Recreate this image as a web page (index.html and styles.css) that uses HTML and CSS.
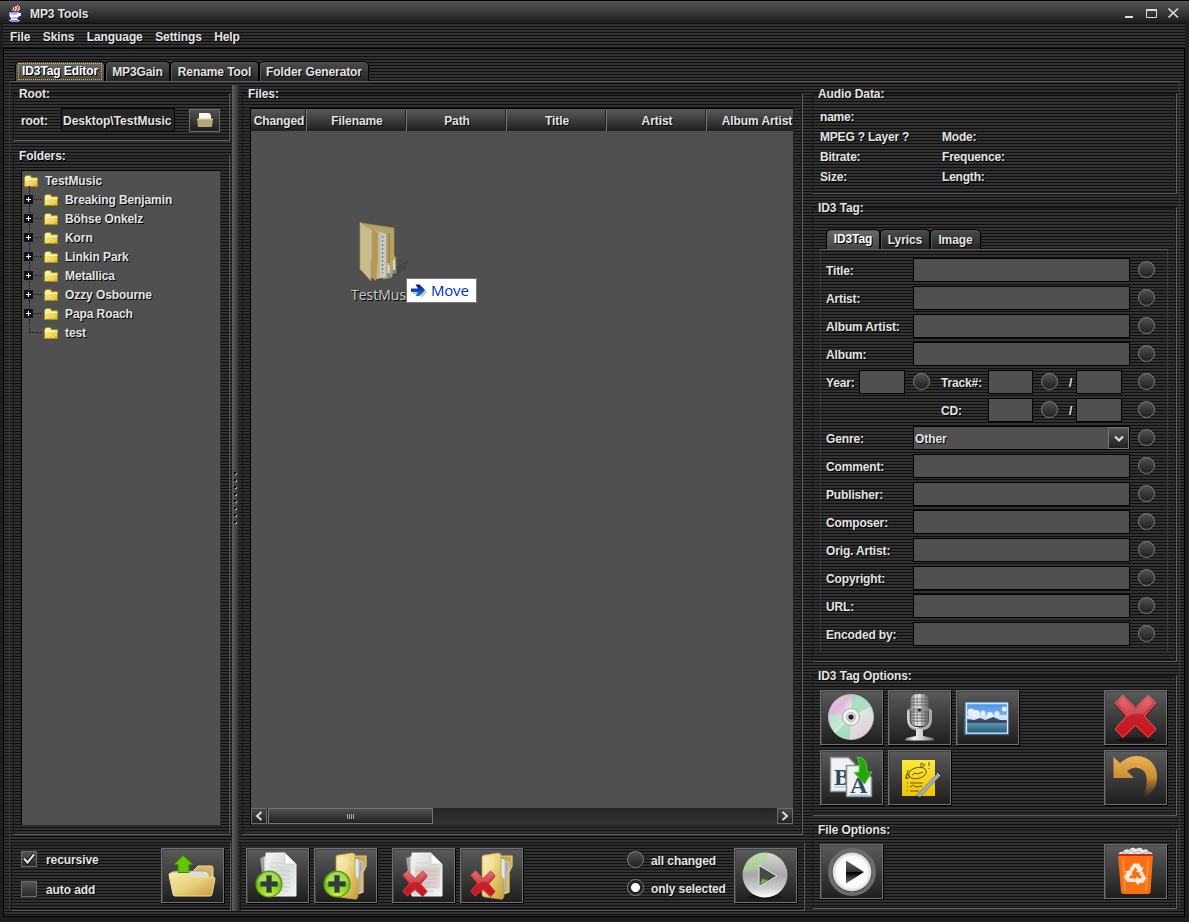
FILE: index.html
```html
<!DOCTYPE html>
<html lang="en">
<head>
<meta charset="utf-8">
<title>MP3 Tools</title>
<link rel="stylesheet" href="styles.css">
</head>
<body>
<svg class="defs" width="0" height="0">
  <defs>
    <linearGradient id="gold" x1="0" y1="0" x2="1" y2="1"><stop offset="0" stop-color="#f8ebb0"/><stop offset=".5" stop-color="#e8d07c"/><stop offset="1" stop-color="#c79a35"/></linearGradient>
    <linearGradient id="yel" x1="0" y1="0" x2="1" y2="1"><stop offset="0" stop-color="#fffbb0"/><stop offset="1" stop-color="#e3b020"/></linearGradient>
    <linearGradient id="red" x1="0" y1="0" x2="0" y2="1"><stop offset="0" stop-color="#e0565c"/><stop offset=".5" stop-color="#c4222b"/><stop offset="1" stop-color="#d0101b"/></linearGradient>
    <radialGradient id="green" cx=".5" cy=".9" r=".9"><stop offset="0" stop-color="#c4f04a"/><stop offset=".5" stop-color="#86cc1e"/><stop offset="1" stop-color="#569f10"/></radialGradient>
    <linearGradient id="paper" x1="0" y1="0" x2="1" y2="1"><stop offset="0" stop-color="#f4f6f5"/><stop offset=".5" stop-color="#d5dad7"/><stop offset="1" stop-color="#f0f8f2"/></linearGradient>
    <linearGradient id="disc" x1="0" y1="0" x2="1" y2="1"><stop offset="0" stop-color="#e8e8e6"/><stop offset=".25" stop-color="#dcb8d8"/><stop offset=".42" stop-color="#eee"/><stop offset=".6" stop-color="#dfe6e0"/><stop offset="1" stop-color="#e0bfdc"/></linearGradient>
    <linearGradient id="chrome" x1="0" y1="0" x2="1" y2="0"><stop offset="0" stop-color="#777"/><stop offset=".3" stop-color="#f4f4f4"/><stop offset=".6" stop-color="#ccc"/><stop offset="1" stop-color="#666"/></linearGradient>
    <linearGradient id="sky" x1="0" y1="0" x2="0" y2="1"><stop offset="0" stop-color="#4a94ea"/><stop offset="1" stop-color="#c5defa"/></linearGradient>
    <linearGradient id="sea" x1="0" y1="0" x2="0" y2="1"><stop offset="0" stop-color="#6393a8"/><stop offset="1" stop-color="#1e6480"/></linearGradient>
    <linearGradient id="undo" x1="0" y1="0" x2="0" y2="1"><stop offset="0" stop-color="#eeb258"/><stop offset=".5" stop-color="#cc8f30"/><stop offset=".95" stop-color="#b87a1e" stop-opacity="0"/></linearGradient>
    <linearGradient id="silver" x1="0" y1="0" x2="0" y2="1"><stop offset="0" stop-color="#d8dcd6"/><stop offset=".5" stop-color="#a8a6a8"/><stop offset=".8" stop-color="#cfcfcf"/><stop offset="1" stop-color="#fff"/></linearGradient>
    <linearGradient id="tri" x1="0" y1="0" x2="0" y2="1"><stop offset="0" stop-color="#666"/><stop offset=".48" stop-color="#333"/><stop offset=".52" stop-color="#000"/><stop offset="1" stop-color="#777"/></linearGradient>
    <linearGradient id="moveArrow" x1="0" y1="0" x2="0" y2="1"><stop offset="0" stop-color="#08107a"/><stop offset="1" stop-color="#0a86e8"/></linearGradient>
    <radialGradient id="white" cx=".5" cy=".5" r=".5"><stop offset="0" stop-color="#fff"/><stop offset=".8" stop-color="#fafafa"/><stop offset="1" stop-color="#d0d0d0"/></radialGradient>
    <linearGradient id="note" x1="0" y1="0" x2="0" y2="1"><stop offset="0" stop-color="#ffe93e"/><stop offset="1" stop-color="#edc208"/></linearGradient>
  </defs>
  <symbol id="folder" viewBox="0 0 14 12">
    <path d="M.5 11.500V2.500L2 .5h4.500l1 2h6v9z" fill="url(#yel)" stroke="#9b9410"/>
    <path d="M1.500 2.500h5M1.500 4.500h12" stroke="#fffad0" stroke-width="1"/>
    <path d="M3 10l7-4M7 10.500l6-3.500" stroke="#fff0a0" stroke-width=".6"/>
  </symbol>
  <symbol id="doc" viewBox="0 0 63 55">
    <path d="M14 10l8-3 6 38-9 1z" fill="#a9aaa9" stroke="#666" stroke-width=".6"/>
    <path d="M17 9l8-3v40l-6 1z" fill="#d0d2d0" stroke="#777" stroke-width=".6"/>
    <path d="M20 5h19l11 11v32H20z" fill="url(#paper)" stroke="#f2f5f3" stroke-width="1"/>
    <path d="M39 5v11h11z" fill="#fff" stroke="#bcc2bf" stroke-width=".7"/>
    <path d="M24 15h12M24 19h13M24 23h21M24 27h20M24 31h21M24 35h21M24 39h20M24 43h18" stroke="#c3cbc7" stroke-width=".8"/>
  </symbol>
  <symbol id="folderV" viewBox="0 0 63 55">
    <path d="M36 8h16v10l-3 6v20l-8 3z" fill="#cfa64a" stroke="#eacd7a" stroke-width="1.200"/>
    <path d="M40 10l5 1v34l-5 2z" fill="#e7e7e7" stroke="#8c8c8c" stroke-width=".7"/>
    <path d="M45 13l4 1v8l-2 3v19l-3 1z" fill="#aaa" stroke="#ddd" stroke-width=".7"/>
    <path d="M22 9q0-2 3-2l13-2q3 0 3 2v20q0 3 3 4v16q0 5-4 4l-15-2q-3 0-3-3z" fill="url(#gold)" stroke="#c09a40" stroke-width=".8"/>
    <path d="M24 10q10-3 11 4t-11 16z" fill="#fff8ce" opacity=".3"/>
  </symbol>
  <symbol id="plus" viewBox="0 0 28 28">
    <circle cx="14" cy="14" r="13" fill="url(#green)" stroke="#58980e" stroke-width="1.200"/>
    <path d="M3 13a11 11 0 0 1 22 0q-11-5-22 0z" fill="#e6ffa0" opacity=".5"/>
    <path d="M11.500 5.500h5v6h6v5h-6v6h-5v-6h-6v-5h6z" fill="#333b40" stroke="#507b1c" stroke-width=".7"/>
  </symbol>
  <symbol id="cross" viewBox="0 0 44 46">
    <path d="M9 4l13 13L35 4l8 7-12 14 12 12-8 9-13-12L9 46l-8-9 12-12L1 11z" fill="#8e1017"/>
    <path d="M9 1l13 13L35 1l8 8-12 13.500 12 13.500-8 8-13-12L9 44l-8-8 12-13.500L1 9z" fill="url(#red)" stroke="#de666b" stroke-width="1"/>
    <path d="M9 3l13 13L35 3l5 6-10 12q-8-3-16 2L4 9z" fill="#fff" opacity=".16"/>
  </symbol>
  <symbol id="recycleArm" viewBox="0 0 63 55" overflow="visible">
    <path d="M25.500 25.500l4-6h5.500l2.500 4 2-1-2 6.500-6-1.500 2-1.200-2-3.300-3 5z" fill="#fdeadc"/>
  </symbol>
</svg>

<div class="window">
  <header class="titlebar">
    <svg class="cup" width="16" height="18" viewBox="0 0 16 18">
      <path d="M6 6l2-2-1-2M9 6l2-2-1-1 2-2" stroke="#fff" stroke-width="3" fill="none"/>
      <path d="M6 6l2-2-1-2M9 6l2-2-1-1 2-2" stroke="#e02020" stroke-width="1.200" fill="none"/>
      <path d="M2 7h10l2.500 1v3l-3 1-1 2 3 1-2 2H4l-3-2 3-1-2-3z" fill="#fff" stroke="#1b2f9c" stroke-width="1"/>
      <path d="M4 9h6M5 13h5M4 15.500h7" stroke="#4a5cc0" stroke-width=".8"/>
    </svg>
    <h1 class="caption">MP3 Tools</h1>
    <svg class="winbtns" width="60" height="16" viewBox="0 0 60 16">
      <path d="M5 11h8" stroke="#ddd" stroke-width="2"/>
      <path d="M26.500 4v7.500h10V4" stroke="#ddd" fill="none"/><path d="M26 4h11" stroke="#ddd" stroke-width="2"/>
      <path d="M48.500 2.500l9.500 9M58 2.500l-9.500 9" stroke="#ddd" stroke-width="1.700"/>
    </svg>
  </header>

  <nav class="menubar"><span>File</span><span>Skins</span><span>Language</span><span>Settings</span><span>Help</span></nav>

  <div class="client">
    <div class="tabs">
      <div class="tab active focus t1">ID3Tag Editor</div><div class="tab t2">MP3Gain</div><div class="tab t3">Rename Tool</div><div class="tab t4">Folder Generator</div>
    </div>

    <main class="panes">
      <section class="left">
        <div class="group root">
          <h2 class="legend">Root:</h2>
          <div class="rootrow">
            <span class="rootlabel">root:</span>
            <div class="rootfield">Desktop\TestMusic</div>
            <div class="browse">
              <svg width="16" height="14" viewBox="0 0 16 14"><path d="M2 0h10l2 2v5H2z" fill="#f6f6f6"/><path d="M0 6h16l-1 8H1z" fill="#b5a67a"/><path d="M0 6h16" stroke="#dccfa5"/></svg>
            </div>
          </div>
        </div>
        <div class="group folders">
          <h2 class="legend">Folders:</h2>
          <div class="tree">
            <div class="node top"><svg class="fi" width="14" height="12"><use href="#folder"/></svg><span>TestMusic</span></div>
            <div class="node"><i class="exp"></i><svg class="fi" width="14" height="12"><use href="#folder"/></svg><span>Breaking Benjamin</span></div>
            <div class="node"><i class="exp"></i><svg class="fi" width="14" height="12"><use href="#folder"/></svg><span>Böhse Onkelz</span></div>
            <div class="node"><i class="exp"></i><svg class="fi" width="14" height="12"><use href="#folder"/></svg><span>Korn</span></div>
            <div class="node"><i class="exp"></i><svg class="fi" width="14" height="12"><use href="#folder"/></svg><span>Linkin Park</span></div>
            <div class="node"><i class="exp"></i><svg class="fi" width="14" height="12"><use href="#folder"/></svg><span>Metallica</span></div>
            <div class="node"><i class="exp"></i><svg class="fi" width="14" height="12"><use href="#folder"/></svg><span>Ozzy Osbourne</span></div>
            <div class="node"><i class="exp"></i><svg class="fi" width="14" height="12"><use href="#folder"/></svg><span>Papa Roach</span></div>
            <div class="node"><i class="exp none"></i><svg class="fi" width="14" height="12"><use href="#folder"/></svg><span>test</span></div>
          </div>
        </div>
        <div class="group bar">
          <div class="checks">
            <div class="check"><i class="box"><svg width="16" height="16" viewBox="0 0 16 16"><path d="M3 7.500l3.500 4L13 3.500" stroke="#000" stroke-width="4" fill="none"/><path d="M3 7.500l3.500 4L13 3.500" stroke="#ddd" stroke-width="2.200" fill="none"/></svg></i><span>recursive</span></div>
            <div class="check"><i class="box"></i><span>auto add</span></div>
          </div>
          <div class="btn">
            <svg width="63" height="55" viewBox="0 0 63 55">
              <path d="M11 24h20l6-6h13q2 0 2 2v14H12z" fill="#d9b55c" stroke="#f0dc96"/>
              <path d="M14 23h30l4 2v8H14z" fill="#dcdcdc" stroke="#888" stroke-width=".6"/>
              <path d="M8 27q0-2 2-2h16l6 4h20q2 0 2 2l-3 15q0 2-2 2H14q-2 0-2-2z" fill="url(#gold)" stroke="#f3df9a" stroke-width="1"/>
              <path d="M22 7.500l10 9h-4v8H17v-8h-4z" fill="#63c803" stroke="#3c8a04" stroke-width="1"/>
            </svg>
          </div>
        </div>
      </section>

      <div class="divider"><div class="grip"></div></div>

      <section class="middle">
        <div class="group files">
          <h2 class="legend">Files:</h2>
          <div class="table">
            <div class="thead"><div class="th first">Changed</div><div class="th">Filename</div><div class="th">Path</div><div class="th">Title</div><div class="th">Artist</div><div class="th">Album Artist</div></div>
            <div class="tbody">
              <div class="drag">
                <svg width="54" height="66" viewBox="0 0 54 66">
                  <path d="M36 48l15-8-3 8-12 8z" fill="#3e3e3e" opacity=".6"/>
                  <path d="M3 3l33 5v27l2 3v15l-4 1v3l-8 2-12-5z" fill="#c3ab68" stroke="#a9914f" stroke-width=".7"/>
                  <path d="M15 11l8 1v46l-4 1-4-3z" fill="#d8c685"/>
                  <path d="M22 12l6 2v43l-6 1z" fill="#d5d5d5"/><path d="M24.500 16v37" stroke="#7d9090" stroke-width="1.500" stroke-dasharray="2 2"/>
                  <path d="M31 13v44" stroke="#8d7740" stroke-width="1"/>
                  <path d="M28 43h4v12h-3z" fill="#cbb674"/>
                  <path d="M36 40v13" stroke="#dfeaf0" stroke-width="2"/><path d="M30.500 45v10" stroke="#e6edf0" stroke-width="2"/>
                  <path d="M30.500 53v4M36 50v4" stroke="#3f8fd0" stroke-width="2"/>
                  <path d="M14 9l6 4v26l-2 22-5-4z" fill="#bca260"/>
                  <path d="M2 2l12 8v29l-1 2v20L2 49z" fill="#d5c891" stroke="#b7a266" stroke-width=".6"/>
                </svg>
                <span class="draglabel">TestMus</span>
                <div class="tip"><svg width="17" height="15" viewBox="0 0 17 15"><path d="M2 7h8V3l6 6-6 6v-4H2z" fill="#c4c4c4"/><path d="M0 5.500h7L4.500 1.500h4L14 7l-5.500 6h-4L7 9H0z" fill="url(#moveArrow)"/></svg><span>Move</span></div>
              </div>
            </div>
            <div class="scroll">
              <div class="sbtn"><svg width="8" height="10" viewBox="0 0 8 10"><path d="M6.500 1L2 5l4.500 4" stroke="#ddd" stroke-width="2" fill="none"/></svg></div>
              <div class="thumb"><i></i></div>
              <div class="sbtn end"><svg width="8" height="10" viewBox="0 0 8 10"><path d="M1.500 1L6 5 1.500 9" stroke="#ddd" stroke-width="2" fill="none"/></svg></div>
            </div>
          </div>
        </div>
        <div class="group bar mbar">
          <div class="btn"><svg width="63" height="55"><use href="#doc" width="63" height="55"/><use href="#plus" x="9" y="22" width="28" height="28"/></svg></div>
          <div class="btn b2"><svg width="63" height="55"><use href="#folderV" width="63" height="55"/><use href="#plus" x="9" y="22" width="28" height="28"/></svg></div>
          <div class="btn b3"><svg width="63" height="55"><use href="#doc" width="63" height="55"/><path d="M22 20h26v20H26z" fill="#e35560" opacity=".15"/><use href="#cross" x="10" y="22" width="26" height="27"/></svg></div>
          <div class="btn b4"><svg width="63" height="55"><use href="#folderV" width="63" height="55"/><use href="#cross" x="10" y="22" width="26" height="27"/></svg></div>
          <div class="radios">
            <div class="ropt"><i class="radio"></i><span>all changed</span></div>
            <div class="ropt"><i class="radio on"></i><span>only selected</span></div>
          </div>
          <div class="btn">
            <svg width="63" height="55" viewBox="0 0 63 55"><ellipse cx="31" cy="49" rx="18" ry="3" fill="#111" opacity=".6"/><circle cx="31" cy="27" r="22.500" fill="url(#silver)"/><path d="M9.500 24A22 22 0 0 1 34 5q-2 17-24.500 19z" fill="#a5df84" opacity=".55"/><path d="M25 17.500L43 28 25 38.500z" fill="#444c42" stroke="#e8e8e8" stroke-width="1"/><path d="M26 37l8-5-6-1z" fill="#75b353"/></svg>
          </div>
        </div>
      </section>

      <section class="right">
        <div class="group audio">
          <h2 class="legend">Audio Data:</h2>
          <div class="info"><span>name:</span><span></span><span>MPEG ? Layer ?</span><span>Mode:</span><span>Bitrate:</span><span>Frequence:</span><span>Size:</span><span>Length:</span></div>
        </div>
        <div class="group id3">
          <h2 class="legend">ID3 Tag:</h2>
          <div class="subtabs"><div class="tab active s1">ID3Tag</div><div class="tab s2">Lyrics</div><div class="tab s3">Image</div></div>
          <div class="form">
            <div class="row"><label>Title:</label><div class="input"></div><i class="radio"></i></div>
            <div class="row"><label>Artist:</label><div class="input"></div><i class="radio"></i></div>
            <div class="row"><label>Album Artist:</label><div class="input"></div><i class="radio"></i></div>
            <div class="row"><label>Album:</label><div class="input"></div><i class="radio"></i></div>
            <div class="row multi"><label>Year:</label><div class="input"></div><i class="radio"></i><label>Track#:</label><div class="input"></div><i class="radio"></i><span class="slash">/</span><div class="input"></div><i class="radio end-radio"></i></div>
            <div class="row multi cd"><label>CD:</label><div class="input"></div><i class="radio"></i><span class="slash">/</span><div class="input"></div><i class="radio end-radio"></i></div>
            <div class="row"><label>Genre:</label><div class="input combo"><span>Other</span><b class="drop"><svg width="10" height="8" viewBox="0 0 10 8"><path d="M1 1.500l4 4 4-4" stroke="#ddd" stroke-width="2.200" fill="none"/></svg></b></div><i class="radio"></i></div>
            <div class="row"><label>Comment:</label><div class="input"></div><i class="radio"></i></div>
            <div class="row"><label>Publisher:</label><div class="input"></div><i class="radio"></i></div>
            <div class="row"><label>Composer:</label><div class="input"></div><i class="radio"></i></div>
            <div class="row"><label>Orig. Artist:</label><div class="input"></div><i class="radio"></i></div>
            <div class="row"><label>Copyright:</label><div class="input"></div><i class="radio"></i></div>
            <div class="row"><label>URL:</label><div class="input"></div><i class="radio"></i></div>
            <div class="row"><label>Encoded by:</label><div class="input"></div><i class="radio"></i></div>
          </div>
        </div>
        <div class="group opts">
          <h2 class="legend">ID3 Tag Options:</h2>
          <div class="btngrid">
            <div class="btn"><svg width="63" height="55" viewBox="0 0 63 55"><circle cx="31" cy="27" r="22.500" fill="url(#disc)" stroke="#ccc" stroke-width=".8"/><path d="M31 27L32 5q12 0 19 11zM31 27L30 49q-9 0-15-6z" fill="#8fdcb0" opacity=".7"/><path d="M31 27L9 24q0 10 5 17z" fill="#b5e4c8" opacity=".7"/><path d="M31 27l-12-19q-8 5-10 15z" fill="#e5b2dd" opacity=".5"/><circle cx="31" cy="27" r="8.500" fill="#f2f2f2" stroke="#aaa"/><circle cx="31" cy="27" r="4.500" fill="#ddd" stroke="#999" stroke-width=".7"/><circle cx="31" cy="27" r="2.600" fill="#222"/></svg></div>
            <div class="btn"><svg width="63" height="55" viewBox="0 0 63 55"><path d="M20.500 20v9q0 10 11 10t11-10v-9" fill="none" stroke="#aaa" stroke-width="3"/><path d="M20 20v9q0 9 11 9" fill="none" stroke="#eee" stroke-width="1"/><rect x="22.500" y="4" width="18" height="32" rx="6" fill="url(#chrome)"/><path d="M26 5v30M29 4v32M34 4v32M37 5v30" stroke="#666" stroke-width=".7"/><path d="M23 9h17M23 12h17M23 15h17M23 22h17M23 25h17M23 28h17M23 31h17" stroke="#555" stroke-width=".8"/><path d="M20 19.500h23" stroke="#8a8a8a" stroke-width="2"/><circle cx="31.500" cy="20" r="1.600" fill="#222"/><path d="M28 39h7v7l10 2 1 2.500H17l1-2.500 10-2z" fill="url(#chrome)"/></svg></div>
            <div class="btn"><svg width="63" height="55" viewBox="0 0 63 55"><path d="M8 11h45v34H8z" fill="#5f7fa5" stroke="#2d3f56"/><path d="M10.500 13.500h41v29.500h-41z" fill="url(#sky)" stroke="#dceaf5" stroke-width="1.400"/><g fill="#f2f7fd" opacity=".9"><circle cx="15" cy="22" r="3.500"/><circle cx="20" cy="24" r="4"/><circle cx="27" cy="23" r="2.500"/><circle cx="34" cy="25" r="3"/><circle cx="41" cy="23.500" r="2.500"/><circle cx="48.300" cy="19" r="2.500"/></g><path d="M11.200 25h39.600v7H11.200z" fill="#e4effb" opacity=".8"/><path d="M11.200 33v-4l7 1 6-2 5 2 8-3 7 3 6.600 0v4z" fill="#364c67"/><path d="M11.200 33h39.600v9.500H11.200z" fill="url(#sea)"/></svg></div>
            <div class="btn far"><svg width="63" height="55" viewBox="0 0 63 55"><ellipse cx="31" cy="50" rx="20" ry="2.500" fill="#111" opacity=".7"/><use href="#cross" x="10" y="3.500" width="43" height="46"/></svg></div>
            <div class="btn"><svg width="63" height="55" viewBox="0 0 63 55"><path d="M10.500 7.500h18l6 6v28h-24z" fill="#f0f2f3" stroke="#8d9293" stroke-width="1.500"/><text class="glyph" x="14" y="35" font-size="24">B</text><path d="M14 37h20" stroke="#9fb6cc"/><path d="M26.500 15.500h13l12 12v19h-25z" fill="#f0f2f3" stroke="#8d9293" stroke-width="1.500"/><text class="glyph" x="30" y="43" font-size="24">A</text><path d="M30 45h18" stroke="#9fb6cc"/><path d="M37 7q11 0 10 15h5L44.500 34 34 22.500l5-.5q1-10-2-15z" fill="#26a50b" stroke="#54cd35" stroke-width="1"/></svg></div>
            <div class="btn"><svg width="63" height="55" viewBox="0 0 63 55"><path d="M14 10h33v36H14z" fill="url(#note)"/><ellipse cx="29.500" cy="23" rx="9" ry="5.500" transform="rotate(-14 29.500 23)" fill="none" stroke="#6b5a08"/><path d="M18 26q2-4 3 0t-4 1M20 20l-2 9M33 13l4 2-4 3zM41 12v4M41 18v1M24 25l3-2 2 1 6-2M22 33h13M22 37l3-2 3 2 6-1M22 41h9M19 33h1M19 37h1M19 41h1" stroke="#6b5a08" stroke-width="1" fill="none"/><path d="M28 46l21-22 3 2-20 21z" fill="#a8acb0" stroke="#6c7074" stroke-width=".7"/><path d="M49 23l3 3" stroke="#eee" stroke-width="1"/><path d="M28 46l4 1-7 3z" fill="#222"/></svg></div>
            <div class="btn far"><svg width="63" height="55" viewBox="0 0 63 55"><path d="M9.500 7v21H30l-7-7q9-7 17 0 6 8-1 28 14-8 14-22 0-13-11-19-14-6-26 5z" fill="url(#undo)"/></svg></div>
          </div>
        </div>
        <div class="group fopts">
          <h2 class="legend">File Options:</h2>
          <div class="btngrid">
            <div class="btn"><svg width="63" height="55" viewBox="0 0 63 55"><circle cx="32" cy="28" r="22" fill="none" stroke="#6c6c6c" stroke-width="4"/><circle cx="32" cy="28" r="19.500" fill="url(#white)"/><path d="M26 16.500L44 28 26 39.500z" fill="url(#tri)"/></svg></div>
            <div class="btn far"><svg width="63" height="55" viewBox="0 0 63 55"><path d="M14 12q1-5 5-4 2-4 6-2 3-4 7-1 5-3 7 1 4-2 6 2 4 0 4 4z" fill="#e8e8e8"/><path d="M18 10l3-2 2 2 4-4 3 3 5-2 3 3 4-2 4 2" stroke="#aaa" fill="none"/><path d="M14 11h35l-2.500 37q-.3 2-2.500 2H19.500q-2.200 0-2.500-2z" fill="#f66f10"/><path d="M14 11h35" stroke="#c62c10" stroke-width="2"/><path d="M19 15l2 32M44 15l-2 32" stroke="#ff9a50" stroke-width="2" opacity=".7"/><use href="#recycleArm" width="63" height="55"/><use href="#recycleArm" width="63" height="55" transform="rotate(120 31.500 30.500)"/><use href="#recycleArm" width="63" height="55" transform="rotate(240 31.500 30.500)"/></svg></div>
          </div>
        </div>
      </section>
    </main>
  </div>
</div>
</body>
</html>
```
FILE: styles.css
```css
* { box-sizing: border-box; }
html, body { margin: 0; height: 100%; overflow: hidden; }
body {
  font: bold 12px/14px "Liberation Sans", Arial, sans-serif;
  letter-spacing: -0.09px;
  color: #e4e4e4;
  text-shadow: 1px 1px 0 #000;
  background: #1d1d1d;
}
h1, h2 { margin: 0; font: inherit; }
i, b { display: block; font-style: normal; }
svg { display: block; }
.defs { position: absolute; }
.glyph { font-family: "Liberation Serif", serif; font-weight: bold; fill: #2f4a68; text-shadow: none; }

.window { width: 1189px; height: 922px; display: flex; flex-direction: column; }

.titlebar {
  height: 23px; flex: none;
  display: flex; align-items: center;
  padding: 3px 9px 0 7px;
  border-top: 1px solid #000;
  background: linear-gradient(#555, #1c1c1c);
}
.caption { margin-left: 7px; flex: 1; }

.menubar, .client, .legend {
  background: repeating-linear-gradient(#303030 0 2px, #0f0f0f 2px 3px) fixed;
}
.menubar { height: 25px; flex: none; margin: 0 4px 0 3px; padding: 7px 0 0 7px; display: flex; gap: 12.500px; letter-spacing: -0.1px; }
.client {
  height: 869px; flex: none;
  margin: 0 4px 0 3px;
  border: 1px solid #000;
}

.tabs { height: 33px; display: flex; align-items: flex-end; padding-left: 6px; margin: 0 4px 0 5px; border-bottom: 1px solid #5c5c5c; }
.tab {
  height: 20px; padding-top: 3px;
  text-align: center; white-space: nowrap;
  border: 1px solid #000; border-bottom: 0;
  border-radius: 5px 5px 0 0;
  background: linear-gradient(#4c4c4c, #252525);
  box-shadow: inset 1px 1px 0 #555;
}
.tab.active { background: linear-gradient(#6a6a6a, #464646); color: #fff; padding-top: 2px; }
.tab.focus { position: relative; }
.tab.focus::after { content: ""; position: absolute; inset: 1px 2px; border: 1px dotted #e8b430; }
.t1 { width: 90px; } .t2 { width: 65px; } .t3 { width: 89px; } .t4 { width: 110px; }

.panes { height: 828px; display: grid; grid-template-columns: 221px 8px 566px 366px; margin: 0 4px 0 5px; border: solid #3a3a3a; border-width: 0 1px; padding-left: 1px; }
.left, .middle, .right { padding-top: 11px; display: flex; flex-direction: column; }
.right { margin-left: 6px; width: 365px; gap: 13px; }

.group {
  border: 1px solid #181818; border-right-color: #5e5e5e; border-bottom-color: #5e5e5e;
  box-shadow: inset -1px -1px 0 #1b1b1b, inset 1px 1px 0 #242424;
}
.legend { width: max-content; height: 14px; margin: -7px 0 0 5px; }

.root { width: 217px; height: 48px; margin-left: 2px; }
.rootrow { display: flex; align-items: center; padding: 7px 0 0 7px; }
.rootlabel { width: 40px; padding-top: 1px; }
.rootfield { width: 114px; height: 24px; border: 1px solid #000; background: #262626; padding: 5px 0 0 1px; white-space: nowrap; overflow: hidden; letter-spacing: 0; }
.browse { margin-left: 14px; width: 31px; height: 23px; border: 1px solid #6c6c6c; background: linear-gradient(#505050, #1e1e1e); padding: 3px 7px; }
.folders { width: 217px; height: 680px; margin: 14px 0 0 2px; }
.tree { width: 200px; height: 656px; margin: 7px 0 0 7px; border: 1px solid #000; border-right-color: #2a2a2a; border-bottom-color: #2a2a2a; background: #505050; }
.node { height: 19px; display: flex; align-items: center; padding-left: 1px; position: relative; }
.node span { margin-left: 7px; }
.node.top { padding-left: 2px; }
.exp { width: 9px; height: 9px; margin: -1px 11px 0 1px; background: linear-gradient(#fff, #fff) center / 5px 1px no-repeat, linear-gradient(#fff, #fff) center / 1px 5px no-repeat, #10121a; z-index: 1; }
.exp.none { visibility: hidden; }
.node:not(.top)::before { content: ""; position: absolute; left: 7px; top: -4px; width: 11px; height: 13px; border: dotted #111; border-width: 0 0 1px 1px; }

.bar { width: 220px; height: 69px; margin-top: 7px; display: flex; padding: 5px 0 0 9px; }
.checks { width: 140px; }
.check { display: flex; align-items: center; height: 16px; gap: 9px; margin: 3px 0 14px; }
.check span, .ropt span { padding-top: 2px; }
.box { width: 16px; height: 16px; border: 1px solid #6a6a6a; background: linear-gradient(#555, #2a2a2a); }
.box svg { margin: -1px; }
.btn { width: 63px; height: 55px; flex: none; border: 1px solid #707070; background: linear-gradient(#5a5a5a, #1e1e1e); box-shadow: inset 1px 1px 0 #444, 1px 1px 0 #000; }
.btn svg { margin: -1px; }

.divider { margin-top: 3px; height: 826px; width: 7px; background: linear-gradient(90deg, #606060, #3c3c3c 70%, #2a2a2a); }
/* dimples: a dark 2px dot with a light pixel at its lower right */
.grip { margin: 387px 0 0 2px; width: 3px; height: 52px; background: repeating-linear-gradient(#000 0 2px, transparent 2px 7px) 0 0 / 2px 100% no-repeat, repeating-linear-gradient(transparent 0 1px, #aaa 1px 3px, transparent 3px 7px) 1px 0 / 2px 100% no-repeat; }

.files { width: 561px; height: 742px; margin-left: 2px; }
.table { width: 544px; height: 718px; margin: 7px 0 0 7px; border: 1px solid #000; background: #505050; border-right-color: #222; border-bottom-color: #222; overflow: hidden; display: flex; flex-direction: column; }
.thead { height: 22px; flex: none; display: flex; background: linear-gradient(#5a5a5a, #202020); }
.th { width: 100px; flex: none; border-left: 1px solid #777; border-right: 1px solid #222; text-align: center; padding: 5px 0 0 2px; }
.th.first { width: 55px; border-left: 0; white-space: nowrap; }
.tbody { flex: 1; }
.drag { position: absolute; left: 358px; top: 220px; width: 120px; height: 86px; }
.drag > svg { opacity: .9; }
.draglabel { position: absolute; left: -7px; top: 67px; font: 14px/16px "Open Sans", "Noto Sans", sans-serif; color: #ccc; letter-spacing: 0; }
.tip { position: absolute; left: 48px; top: 58px; width: 71px; height: 25px; background: #fff; border: 1px solid #777; display: flex; align-items: center; padding-left: 4px; gap: 3px; font: 15px/20px "Open Sans", "Noto Sans", sans-serif; color: #0033bb; text-shadow: none; letter-spacing: -0.2px; }
.tip span { margin-top: -2px; }
.scroll { height: 17px; flex: none; display: flex; background: linear-gradient(#242424, #333); }
.sbtn { width: 16px; height: 16px; border: 1px solid #6c6c6c; background: linear-gradient(#484848, #222); padding: 2px 3px; }
.thumb { width: 165px; height: 16px; margin-left: 1px; border: 1px solid #747474; background: linear-gradient(#505050, #202020); }
.thumb i { width: 8px; height: 5px; margin: 5px auto 0; background: repeating-linear-gradient(90deg, #aaa 0 1px, transparent 1px 2px); }
.end { margin-left: auto; }
.mbar { width: 565px; padding-left: 5px; }
.b2, .b4 { margin-left: 5px; } .b3 { margin-left: 15px; }
.radios { margin-left: 104px; width: 107px; }
.ropt { display: flex; align-items: center; height: 17px; gap: 7px; margin: 3px 0 11px; white-space: nowrap; }
.radio { width: 17px; height: 17px; flex: none; border-radius: 50%; border: 1px solid #808080; background: linear-gradient(#505050, #202020); }
.radio.on { background: radial-gradient(circle, #fff 0 4px, #222 5px); }

.audio { height: 101px; }
.info { display: grid; grid-template-columns: 122px 1fr; grid-auto-rows: 20px; padding: 6px 0 0 7px; line-height: 20px; letter-spacing: -0.2px; }
.id3 { height: 455px; }
.subtabs { display: flex; align-items: flex-end; margin: 14px 8px 0 7px; padding-left: 6px; height: 21px; border-bottom: 1px solid #5c5c5c; }
.s1 { width: 54px; } .s2 { width: 50px; } .s3 { width: 51px; }
.form { margin: 0 8px 0 7px; padding: 8px 0 0 5px; border: solid #3c3c3c; border-width: 0 1px; display: flex; flex-direction: column; gap: 4px; height: 402px; }
.row { height: 24px; display: flex; align-items: center; }
.row label { width: 87px; padding-top: 2px; letter-spacing: -0.15px; }
.row .input { width: 217px; }
.row .radio { margin: -1px 0 0 8px; }
.input { height: 24px; border: 1px solid #000; background: #505050; }
.combo { display: flex; align-items: center; justify-content: space-between; padding-left: 1px; }
.combo span { padding-top: 1px; }
.drop { width: 21px; height: 22px; border: 1px solid #777; background: linear-gradient(#555, #202020); padding: 7px 5px; }
.row.multi { display: grid; grid-template-columns: 33px 46px 36px 47px 45px 36px 7px 46px 33px; }
.row.multi .input, .row.multi label { width: auto; }
.slash { padding-top: 2px; }
.row .end-radio { margin-left: 16px; }
.cd label { grid-column: 4; }
.opts { height: 141px; }
.fopts { height: 80px; }
.btngrid { display: grid; grid-template-columns: 63px 63px 63px 1fr; gap: 5px; padding: 7px 9px 0 7px; }
.far { grid-column: 4; justify-self: end; }
```
